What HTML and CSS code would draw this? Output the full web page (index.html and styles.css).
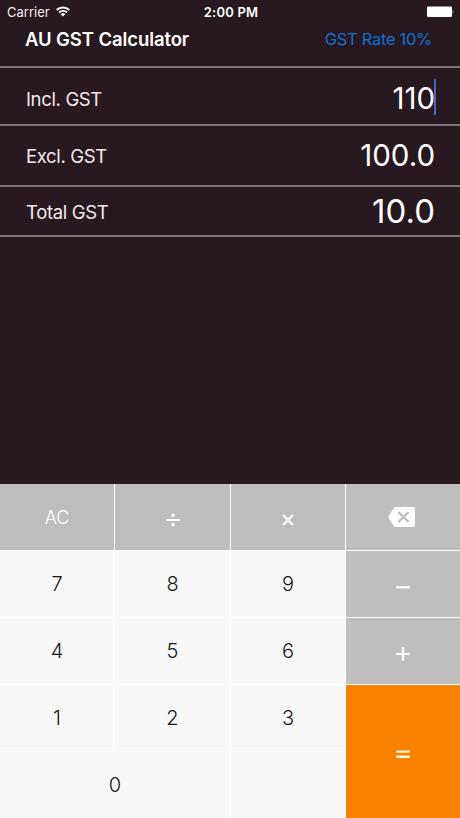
FILE: index.html
```
<!DOCTYPE html>
<html lang="en">

<head>
    <meta charset="UTF-8">
    <meta name="viewport" content="width=device-width, initial-scale=1.0">
    <title>AU GST Calculator</title>
    <link rel="stylesheet" href="styles.css">
</head>

<body>
    <div class="status-bar">
        <div class="carrier">
            <span>Carrier</span>
            <svg class="wifi" viewBox="0 0 14 11" width="14" height="11">
                <path d="M.7 4a9 9 0 0 1 12.6 0M3 6.5a5.7 5.7 0 0 1 8 0" fill="none" stroke="#fff" stroke-width="1.9" />
                <path d="M4.7 8.2a3.2 3.2 0 0 1 4.6 0L7 10.6z" fill="#fff" />
            </svg>
        </div>
        <span class="time">2:00 PM</span>
        <svg class="battery" viewBox="0 0 28 12" width="28" height="12">
            <rect x="0" y="0.5" width="25" height="10.5" rx="1.2" fill="#fff" />
            <path d="M25.7 4q1.6 1.8 0 3.6z" fill="#fff" />
        </svg>
    </div>

    <div class="header">
        <h1>AU GST Calculator</h1>
        <a class="rate">GST Rate 10%</a>
    </div>

    <div class="row incl">
        <span class="label">Incl. GST</span>
        <span class="value">110</span>
        <span class="cursor"></span>
    </div>
    <div class="row excl">
        <span class="label">Excl. GST</span>
        <span class="value">100.0</span>
    </div>
    <div class="row total">
        <span class="label">Total GST</span>
        <span class="value">10.0</span>
    </div>

    <!-- keypad -->
    <div class="keypad">
        <div class="key gray ac">AC</div>
        <div class="key gray">
            <svg class="low" viewBox="0 0 16 16" width="16" height="16">
                <path d="M1.2 8h13.6" stroke="#fff" stroke-width="1.8" />
                <circle cx="8" cy="3.3" r="1.8" fill="#fff" />
                <circle cx="8" cy="12.7" r="1.8" fill="#fff" />
            </svg>
        </div>
        <div class="key gray">
            <svg class="low" viewBox="0 0 16 16" width="16" height="16">
                <path d="M3 3l10 10M13 3L3 13" stroke="#fff" stroke-width="1.8" />
            </svg>
        </div>
        <div class="key gray">
            <svg class="back" viewBox="0 0 28 20" width="28" height="20">
                <path d="M7.5 0H25q2 0 2 2v16q0 2-2 2H7.5Q6.6 20 6 19L.8 11.2Q0 10 .8 8.8L6 1Q6.6 0 7.5 0z" fill="#fff" />
                <path d="M10.5 5l10 10M20.5 5l-10 10" stroke="#bebebe" stroke-width="2.4" />
            </svg>
        </div>

        <div class="key">7</div>
        <div class="key">8</div>
        <div class="key">9</div>
        <div class="key gray">
            <svg class="low" viewBox="0 0 16 16" width="16" height="16">
                <path d="M1.2 8.3h13.6" stroke="#fff" stroke-width="2.4" />
            </svg>
        </div>

        <div class="key">4</div>
        <div class="key">5</div>
        <div class="key">6</div>
        <div class="key gray">
            <svg class="low" viewBox="0 0 16 16" width="16" height="16">
                <path d="M1.2 8h13.6M8 1.2v13.6" stroke="#fff" stroke-width="2.2" />
            </svg>
        </div>

        <div class="key">1</div>
        <div class="key">2</div>
        <div class="key">3</div>
        <div class="key equals">
            <svg class="low" viewBox="0 0 16 16" width="16" height="16">
                <path d="M1.2 5.6h13.6M1.2 10.7h13.6" stroke="#fff6d8" stroke-width="2.4" />
            </svg>
        </div>

        <div class="key zero">0</div>
        <div class="key"></div>
    </div>
</body>

</html>
```

FILE: styles.css
```
* {
    box-sizing: border-box;
}

body {
    display: flex;
    flex-direction: column;
    height: 818px;
    margin: 0;
    overflow: hidden;
    background: #27191f;
    color: #fff;
    font-family: Inter, "Liberation Sans", sans-serif;
}

.status-bar {
    display: grid;
    grid-template-columns: 1fr auto 1fr;
    align-items: center;
    height: 24px;
    padding: 0 5px 0 7px;
    font-size: 13px;
}

.carrier {
    display: flex;
    align-items: center;
    gap: 6px;
    color: #f3e9ee;
}

.wifi {
    margin-bottom: 1px;
}

.time {
    font-weight: 600;
    letter-spacing: 0.2px;
}

.battery {
    justify-self: end;
}

.header {
    display: flex;
    justify-content: space-between;
    align-items: center;
    height: 42px;
    padding: 0 28px 12px 25px;
}

h1 {
    margin: 0;
    font-size: 18.5px;
    font-weight: 600;
    letter-spacing: -0.1px;
}

.rate {
    color: #0f6fd6;
    font-size: 16.5px;
    letter-spacing: -0.3px;
}

.row {
    display: flex;
    align-items: center;
    justify-content: space-between;
    padding: 0 25px 0 26px;
    border-top: 2px solid #80747a;
}

.label {
    color: #f6e9ef;
    font-size: 18.5px;
    letter-spacing: -0.35px;
}

.incl {
    position: relative;
    height: 58px;
    padding-top: 5px;
}

.excl {
    height: 61px;
    padding-top: 1px;
}

.total {
    height: 52px;
    padding-top: 2px;
    border-bottom: 2px solid #80747a;
}

.value {
    margin-bottom: 2px;
    font-size: 29.5px;
}

.total .value {
    font-size: 33px;
}

.cursor {
    position: absolute;
    top: 11px;
    right: 24px;
    width: 2px;
    height: 36px;
    background: #4767c8;
}

.keypad {
    display: grid;
    grid-template-columns: 114px 115px 114px 1fr;
    grid-template-rows: 66px 66px 66px 66px 66px;
    gap: 1px;
    margin-top: auto;
    background: #fff;
}

.key {
    display: flex;
    align-items: center;
    justify-content: center;
    background: #f8f8f8;
    color: #151515;
    font-size: 20px;
    font-weight: 300;
}

.gray {
    background: #bebebe;
    color: #fff;
}

.ac {
    font-size: 18px;
}

.low {
    margin-top: 5px;
}

.back {
    margin-right: 2px;
}

.equals {
    grid-row: span 2;
    background: #f88100;
}

.zero {
    grid-column: span 2;
}
```
